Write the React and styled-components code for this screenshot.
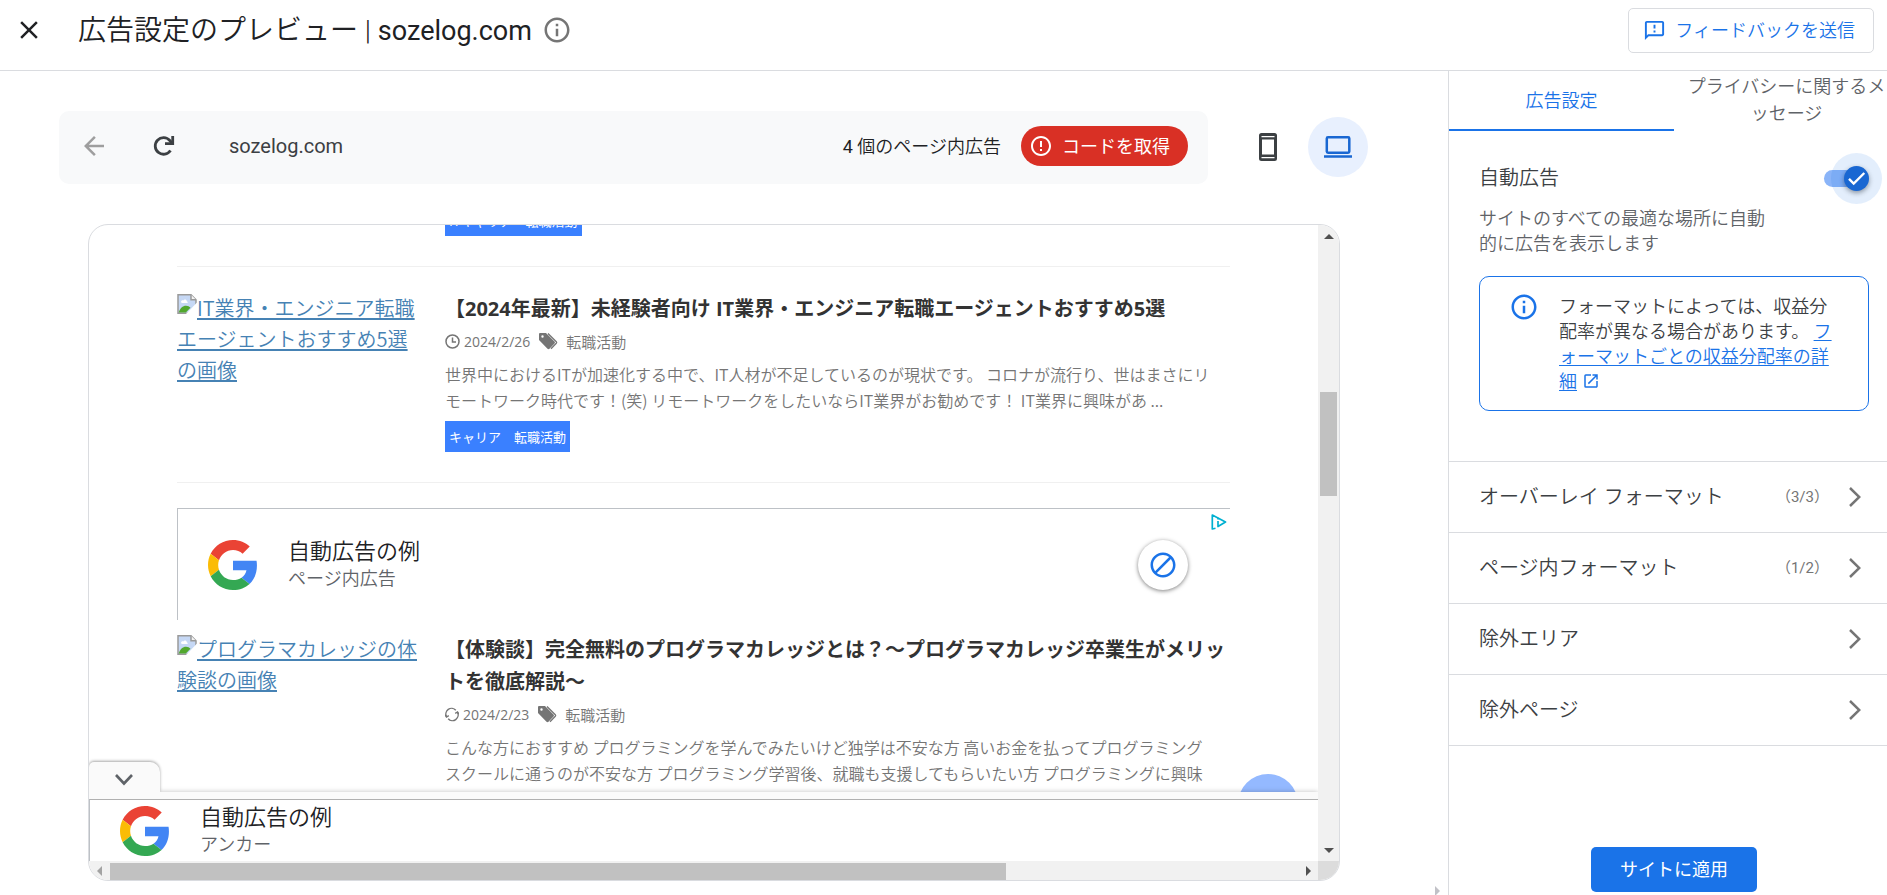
import React from 'react';
import styled, { createGlobalStyle, css } from 'styled-components';
import {
  MdClose,
  MdOutlineInfo,
  MdOutlineFeedback,
  MdArrowBack,
  MdErrorOutline,
  MdBlock,
  MdOpenInNew,
} from 'react-icons/md';

const GlobalStyle = createGlobalStyle`
  *, *::before, *::after { box-sizing: border-box; }
  body {
    margin: 0;
    background: #fff;
    color: #202124;
    font-family: Roboto, "Noto Sans CJK JP", sans-serif;
    font-size: 18px;
    font-weight: 350;
    line-height: 25px;
  }
  button {
    font: inherit;
    color: inherit;
    background: none;
    border: 0;
    padding: 0;
    cursor: pointer;
  }
  h1, h2, h3, p, ul { margin: 0; padding: 0; font: inherit; }
  svg { display: block; flex: none; }
`;

const Screen = styled.div`
  display: flex;
  flex-direction: column;
  height: 100vh;
  overflow: hidden;
`;

/* ---------- header ---------- */

const Header = styled.header`
  display: flex;
  align-items: center;
  flex: none;
  height: 71px;
  padding: 0 13px 10px 14px;
  border-bottom: 1px solid #dadce0;
`;

const CloseButton = styled.button`
  display: flex;
  margin-right: 34px;
  color: #202124;
`;

const Title = styled.h1`
  padding-top: 2px;
  font-size: 28px;
  line-height: 36px;
  white-space: nowrap;
`;

const SiteName = styled.span`
  font-size: 27px;
  font-weight: 400;
`;

const Count = styled.span`
  font-weight: 400;
`;

const InfoButton = styled.button`
  margin-left: 10px;
  color: #757575;
`;

const FeedbackButton = styled.button`
  display: flex;
  align-items: center;
  gap: 9px;
  height: 45px;
  margin-left: auto;
  padding: 0 18px 0 14px;
  border: 1px solid #dadce0;
  border-radius: 5px;
  color: #1a73e8;
  white-space: nowrap;
`;

/* ---------- main column ---------- */

const Body = styled.div`
  display: flex;
  flex: 1;
  min-height: 0;
`;

const Main = styled.main`
  display: flex;
  flex-direction: column;
  flex: 1;
  min-width: 0;
  padding-top: 40px;
`;

const Toolbar = styled.div`
  display: flex;
  align-items: center;
  flex: none;
  padding: 0 80px 0 59px;
`;

const AddressBar = styled.div`
  display: flex;
  align-items: center;
  flex: 1;
  height: 73px;
  padding: 0 20px 3px 23px;
  border-radius: 10px;
  background: #f8f9fa;
`;

const NavButton = styled.button`
  display: flex;
  justify-content: center;
  width: 24px;
  margin-right: 46px;
  color: ${(p) => (p.$muted ? '#9e9e9e' : '#3c4043')};
`;

const Url = styled.span`
  margin-left: 7px;
  color: #3c4043;
  font-size: 20px;
  font-weight: 400;
`;

const AdCount = styled.span`
  margin-left: auto;
  white-space: nowrap;
`;

const CodeButton = styled.button`
  display: flex;
  align-items: center;
  gap: 9px;
  height: 40px;
  margin-left: 20px;
  padding: 0 18px 0 8px;
  border-radius: 20px;
  background: #d93025;
  color: #fff;
  font-weight: 400;
  white-space: nowrap;
`;

const Devices = styled.div`
  display: flex;
  gap: 10px;
  margin-left: 30px;
  padding-bottom: 1px;
`;

const DeviceButton = styled.button`
  display: flex;
  align-items: center;
  justify-content: center;
  width: 60px;
  height: 60px;
  border-radius: 50%;
  background: ${(p) => (p.$active ? '#e8f0fe' : 'transparent')};
  color: ${(p) => (p.$active ? '#1967d2' : '#3c4043')};
`;

const Frame = styled.section`
  display: grid;
  grid-template-columns: minmax(0, 1fr) 21px;
  grid-template-rows: minmax(0, 1fr) 19px;
  flex: 1;
  min-height: 0;
  margin: 40px 108px 0 88px;
  border: 1px solid #dadce0;
  border-radius: 20px;
  overflow: hidden;
`;

const OuterScrollEdge = styled.div`
  display: flex;
  justify-content: flex-end;
  flex: none;
  height: 14px;
  padding: 5px 6px 0 0;
  color: #c1c1c7;
  overflow: hidden;
`;

/* ---------- drawn scroll bars ---------- */

const Scrollbar = styled.div`
  display: flex;
  flex-direction: ${(p) => (p.$vertical ? 'column' : 'row')};
  background: #f1f1f1;
`;

const ScrollStep = styled.span`
  display: flex;
  align-items: center;
  justify-content: center;
  flex: 0 0 21px;
  color: ${(p) => (p.$muted ? '#a3a3a3' : '#505050')};
`;

const ScrollSpace = styled.span`
  flex: ${(p) => p.$size} 0 0;
`;

const ScrollThumb = styled.span`
  flex: ${(p) => p.$size} 0 0;
  margin: ${(p) => (p.$vertical ? '0 2px' : '2px 0 0')};
  background: #c1c1c1;
`;

const ScrollCorner = styled.div`
  background: #dcdcdc;
`;

/* ---------- previewed site ---------- */

const Viewport = styled.div`
  display: flex;
  flex-direction: column;
  min-height: 0;
  overflow: hidden;
  font-family: "Noto Sans CJK JP", sans-serif;
`;

const Scroller = styled.div`
  position: relative;
  flex: 1;
  min-height: 0;
  overflow: hidden;
`;

const SiteContent = styled.div`
  margin-top: -20px;
  padding: 0 88px;
`;

const Article = styled.article`
  display: flex;
  gap: 24px;
  padding: ${(p) => p.$top}px 0 30px;
  border-bottom: 1px solid #f0f0f0;
`;

const Thumb = styled.div`
  flex: 0 0 244px;
  font-size: 20px;
  line-height: 31px;
`;

const ThumbLink = styled.a`
  color: #4682b4;
  text-decoration: underline;
  text-decoration-thickness: 2px;
  text-underline-offset: 2px;
  svg { display: inline-block; vertical-align: 2px; }
`;

const ArticleBody = styled.div`
  flex: 1;
  min-width: 0;
`;

const ArticleTitle = styled.h2`
  padding-top: 1px;
  color: #333;
  font-family: "Open Sans", "Noto Sans CJK JP", sans-serif;
  font-size: 20px;
  font-weight: 700;
  line-height: 32px;
`;

const Meta = styled.div`
  display: flex;
  align-items: center;
  height: 32px;
  color: #757575;
  font-size: 15px;
`;

const MetaDate = styled.time`
  margin: 0 9px 0 4px;
  font-family: "Open Sans", sans-serif;
  font-size: 14px;
  font-weight: 400;
`;

const MetaTag = styled.span`
  margin-left: 8px;
`;

const Excerpt = styled.p`
  margin-top: 4px;
  color: #757575;
  font-size: 16px;
  line-height: 26px;
  white-space: nowrap;
`;

const Category = styled.a`
  display: block;
  width: fit-content;
  margin-top: 8px;
  padding: 0 4px;
  background: #3a80ff;
  color: #fff;
  font-size: 13px;
  font-weight: 400;
  line-height: 31px;
  text-decoration: none;
`;

const FirstCategory = styled(Category)`
  margin: 0 0 0 268px;
`;

const adText = css`
  font-family: Roboto, "Noto Sans CJK JP", sans-serif;
`;

const InPageAd = styled.section`
  ${adText}
  display: flex;
  justify-content: space-between;
  height: 112px;
  margin: 25px 0 13px;
  padding-right: 3px;
  border-top: 1px solid #bdc1c6;
  border-left: 1px solid #bdc1c6;
`;

const AdIdentity = styled.div`
  display: flex;
  align-items: center;
  gap: 30px;
  padding-left: 30px;
`;

const AdTitle = styled.p`
  font-size: 22px;
  line-height: 28px;
`;

const AdKind = styled.p`
  color: #5f6368;
`;

const AdControls = styled.div`
  display: flex;
  align-items: center;
  gap: 23px;
`;

const BlockButton = styled.button`
  display: flex;
  align-items: center;
  justify-content: center;
  width: 50px;
  height: 50px;
  border-radius: 50%;
  background: #fff;
  box-shadow: 0 1px 4px rgba(0, 0, 0, 0.5);
  color: #1a73e8;
`;

const AdChoices = styled.a`
  align-self: flex-start;
  margin-top: 5px;
`;

const BackToTop = styled.button`
  position: absolute;
  right: 20px;
  bottom: -42px;
  width: 60px;
  height: 60px;
  border-radius: 50%;
  background: #94b9ff;
`;

const Anchor = styled.aside`
  ${adText}
  position: relative;
  flex: none;
  padding-top: 7px;
  background: #fafafa;
  box-shadow: 0 0 5px rgba(0, 0, 0, 0.25);
`;

const AnchorAd = styled.div`
  display: flex;
  height: 62px;
  border-top: 1px solid #b0b0b0;
  border-left: 1px solid #bdc1c6;
  background: #fff;
`;

const AnchorToggle = styled.button`
  position: absolute;
  left: 0;
  bottom: 100%;
  display: flex;
  align-items: center;
  justify-content: center;
  width: 71px;
  height: 30px;
  padding: 6px 2px 0 0;
  border-radius: 5px 10px 0 0;
  background: #fafafa;
  box-shadow: 0 -1px 3px rgba(0, 0, 0, 0.35);
  clip-path: inset(-4px -4px 0 0);
  color: #5f6368;
`;

/* ---------- settings panel ---------- */

const Sidebar = styled.aside`
  flex: 0 0 439px;
  border-left: 1px solid #dadce0;
  overflow: hidden;
`;

const Panel = styled.div`
  display: flex;
  flex-direction: column;
  width: 450px;
  height: 100%;
`;

const Tabs = styled.div`
  display: flex;
  flex: none;
  height: 60px;
`;

const Tab = styled.button`
  flex: 1 1 0;
  padding: 0 12px;
  border-bottom: 2px solid ${(p) => (p.$active ? '#1a73e8' : 'transparent')};
  color: ${(p) => (p.$active ? '#1a73e8' : '#5f6368')};
  line-height: 27px;
`;

const AutoAds = styled.section`
  flex: none;
  padding: 32px 30px 50px;
`;

const SwitchRow = styled.label`
  display: flex;
  align-items: center;
  justify-content: space-between;
  height: 30px;
  color: #3c4043;
  font-size: 20px;
`;

const Switch = styled.span`
  position: relative;
  display: flex;
  align-items: center;
  width: 45px;
  height: 25px;
`;

const SwitchInput = styled.input`
  appearance: none;
  width: 42px;
  height: 17px;
  margin: 0;
  border-radius: 9px;
  background: #8ab4f8;
`;

const Knob = styled.span`
  position: absolute;
  right: 0;
  top: 0;
  display: flex;
  align-items: center;
  justify-content: center;
  width: 25px;
  height: 25px;
  border-radius: 50%;
  background: #1967d2;
  color: #fff;
  box-shadow: 0 0 0 13px rgba(26, 115, 232, 0.12), 0 2px 5px rgba(0, 0, 0, 0.4);
  pointer-events: none;
`;

const Description = styled.p`
  max-width: 300px;
  margin-top: 13px;
  color: #5f6368;
`;

const Notice = styled.div`
  display: flex;
  gap: 20px;
  margin-top: 20px;
  padding: 17px 29px 16px;
  border: 1px solid #1a73e8;
  border-radius: 10px;
  color: #3c4043;
`;

const NoticeIcon = styled.span`
  display: flex;
  align-items: center;
  height: 25px;
  color: #1a73e8;
`;

const NoticeLink = styled.a`
  color: #1a73e8;
  text-underline-offset: 2px;
`;

const ExternalIcon = styled.span`
  margin-left: 5px;
  color: #1a73e8;
  svg { display: inline-block; vertical-align: -2px; }
`;

const SettingsList = styled.ul`
  flex: none;
  list-style: none;
  border-top: 1px solid #dadce0;
`;

const SettingsItem = styled.li`
  border-bottom: 1px solid #dadce0;
`;

const SettingsButton = styled.button`
  display: flex;
  align-items: center;
  width: 100%;
  height: 70px;
  padding: 0 38px 0 30px;
  color: #3c4043;
  font-size: 20px;
  text-align: left;
`;

const SettingsCount = styled.span`
  margin-left: auto;
  color: #757575;
  font-size: 15px;
  font-weight: 400;
`;

const Chevron = styled.span`
  margin-left: ${(p) => (p.$afterCount ? '20px' : 'auto')};
  color: #757575;
`;

const PanelFooter = styled.div`
  display: flex;
  justify-content: center;
  margin-top: auto;
  padding-bottom: 3px;
`;

const ApplyButton = styled.button`
  height: 45px;
  padding: 0 29px;
  border-radius: 5px;
  background: #1a73e8;
  color: #fff;
  font-weight: 400;
`;

/* ---------- drawings ---------- */

const GoogleLogo = () => (
  <svg width="50" height="50" viewBox="0 0 48 48" aria-hidden="true">
    <path fill="#EA4335" d="M24 9.5c3.54 0 6.71 1.22 9.21 3.6l6.85-6.85C35.9 2.38 30.47 0 24 0 14.62 0 6.51 5.38 2.56 13.22l7.98 6.19C12.43 13.72 17.74 9.5 24 9.5z" />
    <path fill="#4285F4" d="M46.98 24.55c0-1.57-.15-3.09-.38-4.55H24v9.02h12.94c-.58 2.96-2.26 5.48-4.78 7.18l7.73 6c4.51-4.18 7.09-10.36 7.09-17.65z" />
    <path fill="#FBBC05" d="M10.53 28.59c-.48-1.45-.76-2.99-.76-4.59s.27-3.14.76-4.59l-7.98-6.19C.92 16.46 0 20.12 0 24c0 3.88.92 7.54 2.56 10.78l7.97-6.19z" />
    <path fill="#34A853" d="M24 48c6.48 0 11.93-2.13 15.89-5.81l-7.73-6c-2.15 1.45-4.92 2.3-8.16 2.3-6.26 0-11.57-4.22-13.47-9.91l-7.98 6.19C6.51 42.62 14.62 48 24 48z" />
  </svg>
);

const BrokenImage = () => (
  <svg width="20" height="20" viewBox="0 0 20 20" aria-hidden="true">
    <path d="M1 .8h13l5 5v13.4H1z" fill="#c6d8f5" stroke="#9a9a9a" strokeWidth="1.5" />
    <path d="M4 8.2c0-1.700 1.400-2.300 2.400-1.800.6-1.500 3.400-1.200 3.400.8 1.300.2 1.200 1.900 0 1.900H5z" fill="#fff" />
    <path d="M1.800 18.400c1-4 4-6.600 7.200-6.600 2 0 3.400.8 4.500 2l-4.700 4.600z" fill="#52a82e" />
    <path d="M14 .8v5h5" fill="#f4f4f4" stroke="#9a9a9a" strokeWidth="1.500" />
    <path d="M20 8.500 9 20h11z" fill="#fff" />
  </svg>
);

const ReloadIcon = () => (
  <svg width="22" height="22" viewBox="0 0 22 22" fill="none" stroke="currentColor" strokeWidth="2.800" aria-hidden="true">
    <path d="M17.500 15.500A8.300 8.300 0 1 1 16.800 5.500l2.200 2.700" />
    <path d="M19.700 1v7.700H12" />
  </svg>
);

const PhoneIcon = () => (
  <svg width="18" height="28" viewBox="0 0 18 28" aria-hidden="true">
    <path fill="currentColor" fillRule="evenodd" d="M2.500 0h13A2.500 2.500 0 0 1 18 2.500v23a2.500 2.500 0 0 1-2.500 2.500h-13A2.500 2.500 0 0 1 0 25.500v-23A2.500 2.500 0 0 1 2.500 0zM3 6.500v15h12v-15zM2.500 3v1.300h13V3zm0 21v1.300h13V24z" />
  </svg>
);

const LaptopIcon = () => (
  <svg width="28" height="22" viewBox="0 0 28 22" fill="none" stroke="currentColor" strokeWidth="2.500" aria-hidden="true">
    <rect x="2.800" y="1.300" width="22.500" height="15.500" rx="1.200" />
    <path d="M0 20.500h28" />
  </svg>
);

const CheckIcon = () => (
  <svg width="19" height="19" viewBox="0 0 19 19" fill="none" stroke="currentColor" strokeWidth="2.400" aria-hidden="true">
    <path d="M2 9.800l4.700 4.700L17.300 4" />
  </svg>
);

const ClockIcon = () => (
  <svg width="15" height="15" viewBox="0 0 15 15" fill="none" stroke="currentColor" strokeWidth="1.500" aria-hidden="true">
    <circle cx="7.500" cy="7.500" r="6.500" />
    <path d="M7.500 3.500v4.500h3.500" />
  </svg>
);

const UpdateIcon = () => (
  <svg width="14" height="15" viewBox="0 0 14 15" fill="none" stroke="currentColor" strokeWidth="1.400" aria-hidden="true">
    <path d="M1.600 9.800A5.700 5.700 0 0 1 10.800 3.200M12.400 5.200A5.700 5.700 0 0 1 3.200 11.800" />
    <path d="M0 7.700l1.500 2.300 2.300-1.300M14 7.300l-1.500-2.300-2.300 1.300" />
  </svg>
);

const TagsIcon = () => (
  <svg width="19" height="17" viewBox="0 0 19 17" aria-hidden="true">
    <path fill="currentColor" fillRule="evenodd" d="M1 0h6l8.500 8.500c.6.600.6 1.400 0 2L10.500 15.800c-.6.600-1.400.600-2 0L0 7V1a1 1 0 0 1 1-1zm2.500 2.300A1.200 1.200 0 1 0 3.500 4.700a1.200 1.200 0 0 0 0-2.400z" />
    <path d="M9 0.500l8.300 8.300c.5.500.5 1 0 1.500l-5.300 5.500" fill="none" stroke="currentColor" strokeWidth="1.300" />
  </svg>
);

const AdChoicesIcon = () => (
  <svg width="16" height="16" viewBox="0 0 16 16" fill="none" stroke="#00b0d1" strokeWidth="1.700" strokeLinejoin="round" aria-hidden="true">
    <path d="M4.500 14.200 1.300 15V1l13.200 7-7.500 4.500V7" />
    <path d="M6.200 4.700h1.700" />
  </svg>
);

const ChevronRight = () => (
  <svg width="12" height="20" viewBox="0 0 12 20" fill="none" stroke="currentColor" strokeWidth="2.500" aria-hidden="true">
    <path d="M1 1l9.300 9L1 19" />
  </svg>
);

const ChevronDown = () => (
  <svg width="18" height="12" viewBox="0 0 18 12" fill="none" stroke="currentColor" strokeWidth="2.600" aria-hidden="true">
    <path d="M1 1l8 8.500L17 1" />
  </svg>
);

const trianglePaths = {
  up: 'M0 8h10L5 3z',
  down: 'M0 2h10L5 7z',
  left: 'M7 0v10L2 5z',
  right: 'M3 0v10l5-5z',
};

const Triangle = ({ to }) => (
  <svg width="10" height="10" viewBox="0 0 10 10" aria-hidden="true">
    <path fill="currentColor" d={trianglePaths[to]} />
  </svg>
);

/* ---------- data ---------- */

const articles = [
  {
    thumb: 'IT業界・エンジニア転職エージェントおすすめ5選の画像',
    title: '【2024年最新】未経験者向け IT業界・エンジニア転職エージェントおすすめ5選',
    icon: <ClockIcon />,
    date: '2024/2/26',
    excerpt: [
      '世界中におけるITが加速化する中で、IT人材が不足しているのが現状です。 コロナが流行り、世はまさにリ',
      'モートワーク時代です！(笑) リモートワークをしたいならIT業界がお勧めです！ IT業界に興味があ ...',
    ],
    category: 'キャリア　転職活動',
  },
  {
    thumb: 'プログラマカレッジの体験談の画像',
    title: '【体験談】完全無料のプログラマカレッジとは？〜プログラマカレッジ卒業生がメリットを徹底解説〜',
    icon: <UpdateIcon />,
    date: '2024/2/23',
    excerpt: [
      'こんな方におすすめ プログラミングを学んでみたいけど独学は不安な方 高いお金を払ってプログラミング',
      'スクールに通うのが不安な方 プログラミング学習後、就職も支援してもらいたい方 プログラミングに興味',
    ],
  },
];

const settings = [
  { name: 'オーバーレイ フォーマット', count: '（3/3）' },
  { name: 'ページ内フォーマット', count: '（1/2）' },
  { name: '除外エリア' },
  { name: '除外ページ' },
];

const ArticleCard = ({ article, top }) => (
  <Article $top={top}>
    <Thumb>
      <ThumbLink href="#">
        <BrokenImage />
        {article.thumb}
      </ThumbLink>
    </Thumb>
    <ArticleBody>
      <ArticleTitle>{article.title}</ArticleTitle>
      <Meta>
        {article.icon}
        <MetaDate>{article.date}</MetaDate>
        <TagsIcon />
        <MetaTag>転職活動</MetaTag>
      </Meta>
      <Excerpt>
        {article.excerpt[0]}
        <br />
        {article.excerpt[1]}
      </Excerpt>
      {article.category && <Category href="#">{article.category}</Category>}
    </ArticleBody>
  </Article>
);

const SampleAd = ({ kind }) => (
  <AdIdentity>
    <GoogleLogo />
    <div>
      <AdTitle>自動広告の例</AdTitle>
      <AdKind>{kind}</AdKind>
    </div>
  </AdIdentity>
);

export default function App() {
  return (
    <Screen>
      <GlobalStyle />
      <Header>
        <CloseButton aria-label="閉じる">
          <MdClose size={30} />
        </CloseButton>
        <Title>
          広告設定のプレビュー | <SiteName>sozelog.com</SiteName>
        </Title>
        <InfoButton aria-label="情報">
          <MdOutlineInfo size={30} />
        </InfoButton>
        <FeedbackButton>
          <MdOutlineFeedback size={23} />
          フィードバックを送信
        </FeedbackButton>
      </Header>

      <Body>
        <Main>
          <Toolbar>
            <AddressBar>
              <NavButton $muted aria-label="戻る">
                <MdArrowBack size={30} />
              </NavButton>
              <NavButton aria-label="再読み込み">
                <ReloadIcon />
              </NavButton>
              <Url>sozelog.com</Url>
              <AdCount>
                <Count>4</Count> 個のページ内広告
              </AdCount>
              <CodeButton>
                <MdErrorOutline size={24} />
                コードを取得
              </CodeButton>
            </AddressBar>
            <Devices>
              <DeviceButton aria-label="モバイル">
                <PhoneIcon />
              </DeviceButton>
              <DeviceButton $active aria-label="パソコン">
                <LaptopIcon />
              </DeviceButton>
            </Devices>
          </Toolbar>

          <Frame>
            <Viewport>
              <Scroller>
                <SiteContent>
                  <Article $top={0}>
                    <FirstCategory href="#">ITキャリア　転職活動</FirstCategory>
                  </Article>
                  <ArticleCard article={articles[0]} top={25} />
                  <InPageAd>
                    <SampleAd kind="ページ内広告" />
                    <AdControls>
                      <BlockButton aria-label="この広告をブロック">
                        <MdBlock size={30} />
                      </BlockButton>
                      <AdChoices href="#" aria-label="AdChoices">
                        <AdChoicesIcon />
                      </AdChoices>
                    </AdControls>
                  </InPageAd>
                  <ArticleCard article={articles[1]} top={0} />
                </SiteContent>
                <BackToTop aria-label="トップへ戻る" />
              </Scroller>
              <Anchor>
                <AnchorToggle aria-label="広告を閉じる">
                  <ChevronDown />
                </AnchorToggle>
                <AnchorAd>
                  <SampleAd kind="アンカー" />
                </AnchorAd>
              </Anchor>
            </Viewport>
            <Scrollbar $vertical>
              <ScrollStep><Triangle to="up" /></ScrollStep>
              <ScrollSpace $size={146} />
              <ScrollThumb $vertical $size={104} />
              <ScrollSpace $size={344} />
              <ScrollStep><Triangle to="down" /></ScrollStep>
            </Scrollbar>
            <Scrollbar>
              <ScrollStep $muted><Triangle to="left" /></ScrollStep>
              <ScrollThumb $size={896} />
              <ScrollSpace $size={291} />
              <ScrollStep><Triangle to="right" /></ScrollStep>
            </Scrollbar>
            <ScrollCorner />
          </Frame>
          <OuterScrollEdge>
            <Triangle to="right" />
          </OuterScrollEdge>
        </Main>

        <Sidebar>
          <Panel>
            <Tabs role="tablist">
              <Tab role="tab" aria-selected="true" $active>広告設定</Tab>
              <Tab role="tab" aria-selected="false">プライバシーに関するメッセージ</Tab>
            </Tabs>
            <AutoAds>
              <SwitchRow>
                自動広告
                <Switch>
                  <SwitchInput type="checkbox" role="switch" defaultChecked />
                  <Knob><CheckIcon /></Knob>
                </Switch>
              </SwitchRow>
              <Description>サイトのすべての最適な場所に自動的に広告を表示します</Description>
              <Notice>
                <NoticeIcon><MdOutlineInfo size={30} /></NoticeIcon>
                <p>
                  フォーマットによっては、収益分配率が異なる場合があります。{' '}
                  <NoticeLink href="#">フォーマットごとの収益分配率の詳細</NoticeLink>
                  <ExternalIcon><MdOpenInNew size={18} /></ExternalIcon>
                </p>
              </Notice>
            </AutoAds>
            <SettingsList>
              {settings.map((item) => (
                <SettingsItem key={item.name}>
                  <SettingsButton>
                    {item.name}
                    {item.count && <SettingsCount>{item.count}</SettingsCount>}
                    <Chevron $afterCount={Boolean(item.count)}><ChevronRight /></Chevron>
                  </SettingsButton>
                </SettingsItem>
              ))}
            </SettingsList>
            <PanelFooter>
              <ApplyButton>サイトに適用</ApplyButton>
            </PanelFooter>
          </Panel>
        </Sidebar>
      </Body>
    </Screen>
  );
}
